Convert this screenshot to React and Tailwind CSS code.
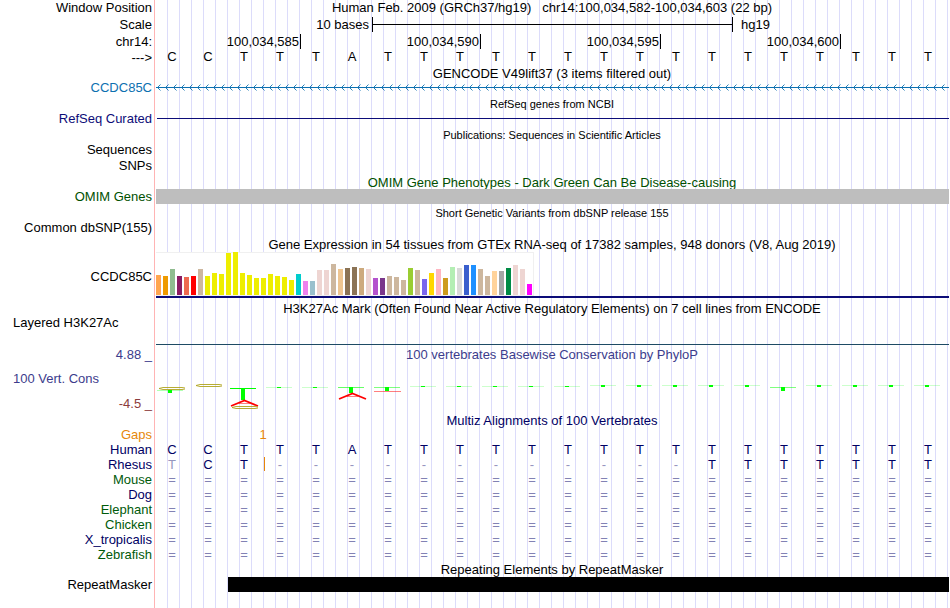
const bases = "CCTTTATTTTTTTTTTTTTTTT".split("");
const rhesus = "TCT------------TTTTTTT".split("");

const positions = ["100,034,585", "100,034,590", "100,034,595", "100,034,600"];

const tissues = [
  [20, "#ffa54f"], [19, "#ee9a00"], [26, "#8fbc8f"], [19, "#8b1c62"], [18, "#ee6a50"], [19, "#ff0000"],
  [26, "#cdb79e"], [19, "#eeee00"], [22, "#eeee00"], [21, "#eeee00"], [42, "#eeee00"], [43, "#eeee00"],
  [22, "#eeee00"], [20, "#eeee00"], [17, "#eeee00"], [17, "#eeee00"], [21, "#eeee00"], [19, "#eeee00"],
  [18, "#eeee00"], [15, "#eeee00"], [21, "#00cdcd"], [14, "#ee82ee"], [14, "#9ac0cd"], [25, "#eed5d2"],
  [25, "#eed5d2"], [31, "#cdb79e"], [26, "#eec591"], [27, "#8b7355"], [28, "#8b7355"], [27, "#cdaa7d"],
  [26, "#eed5d2"], [17, "#b452cd"], [17, "#7a378b"], [19, "#cdb79e"], [18, "#cdb79e"], [15, "#cdb79e"],
  [27, "#9acd32"], [25, "#cdb79e"], [16, "#7a67ee"], [22, "#ffd700"], [26, "#ffb6c1"], [17, "#cd9b1d"],
  [28, "#b4eeb4"], [27, "#d9d9d9"], [30, "#3a5fcd"], [30, "#1e90ff"], [26, "#cdb79e"], [19, "#cdb79e"],
  [24, "#ffd39b"], [24, "#a6a6a6"], [27, "#008b45"], [30, "#eed5d2"], [26, "#eed5d2"], [11, "#ff00ff"],
];

const species = [
  { name: "Mouse", color: "text-[#005a0a]" },
  { name: "Dog", color: "text-[#000064]" },
  { name: "Elephant", color: "text-[#005a0a]" },
  { name: "Chicken", color: "text-[#005a0a]" },
  { name: "X_tropicalis", color: "text-[#000064]" },
  { name: "Zebrafish", color: "text-[#005a0a]" },
];

function Row({ label, labelClass = "text-right", height = "h-[15px]", children }) {
  return (
    <div className={`flex ${height}`}>
      <div
        className={`w-[155px] shrink-0 border-r border-[#ffb4b4] bg-white pr-[2px] whitespace-pre shadow-[1px_0_0_#fff] ${labelClass}`}
      >
        {label}
      </div>
      <div className="min-w-0 flex-1">{children}</div>
    </div>
  );
}

function Title({ children, color = "", small = false, label, labelClass, height = "h-4" }) {
  return (
    <Row label={label} labelClass={labelClass} height={height}>
      <h2 className={`text-center whitespace-pre ${small ? "text-[11px]" : ""} ${color}`}>{children}</h2>
    </Row>
  );
}

function Letters({ letters, className = "" }) {
  return (
    <div className={`-ml-px grid grid-cols-22 pr-[3px] text-center ${className}`}>
      {letters.map((letter, i) => (
        <span key={i}>{letter}</span>
      ))}
    </div>
  );
}

function GeneArrows() {
  return (
    <svg className="block h-[15px] w-full" stroke="#0c70b0" fill="none">
      <defs>
        <pattern id="arrows" x="2" width="8" height="15" patternUnits="userSpaceOnUse">
          <path d="M3.5 4.5 L0.5 7.5 L3.5 10.5" strokeWidth="0.9" />
        </pattern>
      </defs>
      <rect width="100%" height="15" fill="url(#arrows)" stroke="none" />
      <line x1="1" x2="100%" y1="7.5" y2="7.5" />
    </svg>
  );
}

function TissueChart() {
  return (
    <svg className="block" width="379" height="44" shapeRendering="crispEdges">
      <rect x="1" width="378" height="44" fill="#f0f0f0" />
      <rect x="1" y="1" width="377" height="42" fill="#fff" />
      {tissues.map(([height, color], i) => (
        <rect key={i} x={1 + i * 7} y={43 - height} width="5" height={height} fill={color} />
      ))}
    </svg>
  );
}

// flattened C, open on the right hand side
function WideC({ x, y }) {
  return (
    <g fill="none" stroke="#b0a41e" strokeWidth="0.9">
      <path d={`M${x + 27} ${y + 1} L${x + 24} ${y + 0.5} H${x + 5} L${x + 1} ${y + 1.5} L${x + 5} ${y + 2.5} H${x + 24} L${x + 27} ${y + 2}`} />
    </g>
  );
}

function WideA({ x, y }) {
  return (
    <g fill="none" stroke="#f00">
      <path d={`M${x} ${y + 6} L${x + 13.5} ${y + 0.5} L${x + 27} ${y + 6}`} strokeWidth="1.8" />
      <path d={`M${x + 8} ${y + 3.5} H${x + 19}`} opacity="0.5" />
    </g>
  );
}

function Conservation() {
  const flat = bases.map((_, i) => i).filter((i) => i > 2 && i !== 5 && i !== 6 && i !== 17);
  return (
    <svg className="block" width="792" height="50">
      <WideC x={3} y={25} />
      <rect x="2" y="28" width="26" height="1" fill="#0f0" opacity="0.3" />
      <rect x="13" y="28" width="4" height="3" fill="#0f0" />
      <WideC x={40} y={22} />
      <rect x="75" y="26" width="26" height="1" fill="#0f0" />
      <rect x="86" y="26" width="4" height="12" fill="#0f0" />
      <WideA x={76} y={38} />
      <WideC x={76} y={44} />
      <rect x="183" y="25" width="26" height="1" fill="#0f0" opacity="0.6" />
      <rect x="194" y="25" width="4" height="6" fill="#0f0" />
      <WideA x={184} y={31} />
      <rect x="219" y="25" width="26" height="1" fill="#0f0" opacity="0.5" />
      <rect x="230" y="25" width="4" height="4" fill="#0f0" />
      <rect x="219" y="29" width="27" height="1" fill="#f00" opacity="0.5" />
      {flat.map((i) => (
        <g key={i} fill="#0f0">
          <rect x={3 + i * 36} y={i < 5 ? 25 : i < 12 ? 24 : 23} width="26" height="1" opacity="0.2" />
          <rect x={14 + i * 36} y={i < 5 ? 25 : i < 12 ? 24 : 23} width="4" height={i < 12 ? 1 : 2} />
        </g>
      ))}
      <rect x="615" y="25" width="26" height="1" fill="#0f0" opacity="0.5" />
      <rect x="626" y="25" width="4" height="4" fill="#0f0" />
    </svg>
  );
}

export default function App() {
  return (
    <main className="flex min-h-screen flex-col bg-white bg-[repeating-linear-gradient(to_right,transparent_0_11px,#dcdcfa_11px_12px)] pr-px font-['Liberation_Sans',Arial,sans-serif] text-[13px] leading-[15px] text-black">
      <Title label="Window Position" height="h-[17px]">
        Human Feb. 2009 (GRCh37/hg19)   chr14:100,034,582-100,034,603 (22 bp)
      </Title>
      <Row label="Scale" height="h-[17px]">
        <div className="grid grid-cols-22 pl-[2px]">
          <span className="col-span-6 pr-1 text-right">10 bases</span>
          <div className="col-span-10 -ml-px flex items-center border-x border-black">
            <div className="h-px w-full bg-black"></div>
          </div>
          <span className="col-span-6 pl-2">hg19</span>
        </div>
      </Row>
      <Row label="chr14:" height="h-[15px]">
        <div className="grid grid-cols-22 pl-[2px] text-right">
          {positions.map((position, i) => (
            <span key={position} className={`border-r border-black pr-px ${i === 0 ? "col-span-4" : "col-span-5"}`}>
              {position}
            </span>
          ))}
        </div>
      </Row>
      <Row label="--->" labelClass="pt-px text-right" height="h-[17px]">
        <Letters letters={bases} />
      </Row>

      <Title height="h-[14px]">GENCODE V49lift37 (3 items filtered out)</Title>
      <Row label="CCDC85C" labelClass="text-right text-[#0c70b0]" height="h-[17px]">
        <GeneArrows />
      </Row>
      <Title small height="h-[14px]">RefSeq genes from NCBI</Title>
      <Row label="RefSeq Curated" labelClass="text-right text-[#0c0c78]" height="h-[17px]">
        <div className="mt-[7px] ml-[2px] h-px bg-[#0c0c78]"></div>
      </Row>
      <Title small height="h-[14px]">Publications: Sequences in Scientific Articles</Title>
      <Row label="Sequences" height="h-4" />
      <Row label="SNPs" height="h-[17px]" />
      <Title color="text-[#005000]" height="h-[14px]">
        OMIM Gene Phenotypes - Dark Green Can Be Disease-causing
      </Title>
      <Row label="OMIM Genes" labelClass="text-right text-[#005000]" height="h-[17px]">
        <div className="ml-px h-[15px] bg-[#bebebe]"></div>
      </Row>
      <Title small height="h-[14px]">Short Genetic Variants from dbSNP release 155</Title>
      <Row label="Common dbSNP(155)" height="h-[17px]" />

      <Title height="h-[15px]">
        Gene Expression in 54 tissues from GTEx RNA-seq of 17382 samples, 948 donors (V8, Aug 2019)
      </Title>
      <Row label="CCDC85C" labelClass="pt-[17px] text-right" height="h-[49px]">
        <TissueChart />
        <div className="ml-px h-[2px] bg-[#0c0c78]"></div>
      </Row>

      <Title height="h-[14px]">
        H3K27Ac Mark (Often Found Near Active Regulatory Elements) on 7 cell lines from ENCODE
      </Title>
      <Row label="Layered H3K27Ac" labelClass="pl-[13px]" height="h-8">
        <div className="mt-[29px] ml-px h-px bg-[#1e4b64]"></div>
      </Row>

      <Title label="4.88 _" labelClass="text-right text-[#3c3c8c]" color="text-[#3c3c8c]" height="h-[15px]">
        100 vertebrates Basewise Conservation by PhyloP
      </Title>
      <Row
        label={
          <div className="flex h-full flex-col justify-between pt-[9px] pb-[2px]">
            <span className="pl-[13px] text-[#3c3c8c]">100 Vert. Cons</span>
            <span className="text-right text-[#8c3c3c]">-4.5 _</span>
          </div>
        }
        labelClass=""
        height="h-[51px]"
      >
        <Conservation />
      </Row>

      <Title color="text-[#000064]" height="h-[14px]">Multiz Alignments of 100 Vertebrates</Title>
      <Row label="Gaps" labelClass="text-right text-[#e6870a]">
        <div className="grid grid-cols-22 pr-[2px] text-center text-[#e6870a]">
          <span className="col-span-2 col-start-3">1</span>
        </div>
      </Row>
      <Row label="Human" labelClass="text-right text-[#000064]">
        <Letters letters={bases} className="text-[#000064]" />
      </Row>
      <Row label="Rhesus" labelClass="text-right text-[#000064]">
        <div className="-ml-px grid grid-cols-22 pr-[3px] text-center text-[#000064]">
          {rhesus.map((letter, i) => (
            <span key={i} className={`relative ${i === 0 || letter === "-" ? "text-[#9696be]" : ""}`}>
              {letter}
              {i === 2 && <i className="absolute top-0 -right-[3px] h-[14px] w-px bg-[#e6870a]"></i>}
            </span>
          ))}
        </div>
      </Row>
      {species.map(({ name, color }) => (
        <Row key={name} label={name} labelClass={`text-right ${color}`}>
          <Letters letters={bases.map(() => "=")} className="text-[#8282b4]" />
        </Row>
      ))}

      <Title height="h-[15px]">Repeating Elements by RepeatMasker</Title>
      <Row label="RepeatMasker" height="h-[15px]">
        <div className="ml-[73px] h-[15px] bg-black"></div>
      </Row>
      <Row height="flex-1" />
    </main>
  );
}
